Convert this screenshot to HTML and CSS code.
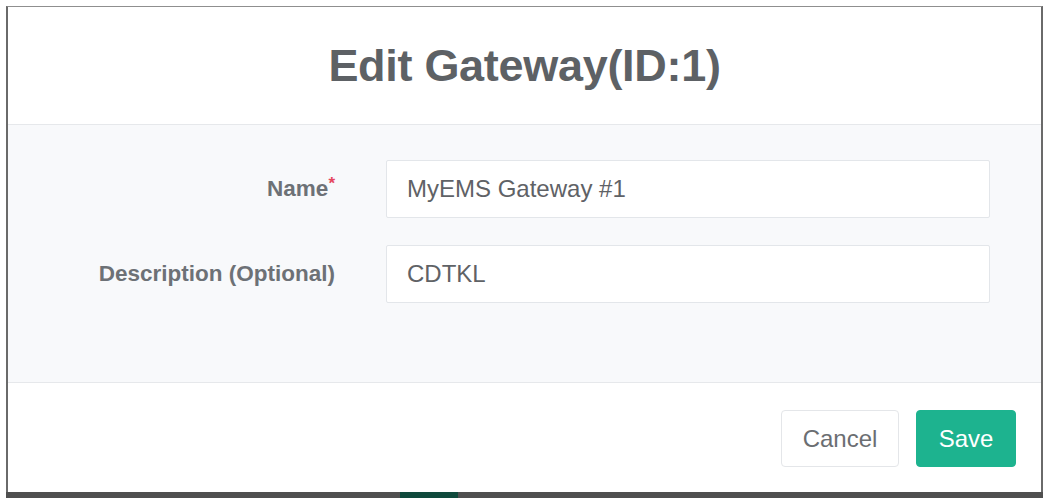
FILE: index.html
```html
<!DOCTYPE html>
<html lang="en">
<head>
<meta charset="utf-8">
<title>Edit Gateway</title>
<link rel="stylesheet" href="styles.css">
</head>
<body>
<div class="stage">
  <div class="modal">
    <div class="modal-header">
      <h2 class="modal-title">Edit Gateway(ID:1)</h2>
    </div>
    <div class="modal-body">
      <div class="form-row">
        <label class="form-label">Name<span class="req">*</span></label>
        <div class="form-input">MyEMS Gateway #1</div>
      </div>
      <div class="form-row">
        <label class="form-label">Description (Optional)</label>
        <div class="form-input">CDTKL</div>
      </div>
    </div>
    <div class="modal-footer">
      <button class="btn btn-cancel">Cancel</button>
      <button class="btn btn-save">Save</button>
    </div>
  </div>
  <div class="backdrop-strip"><span class="ghost-btn"></span></div>
</div>
</body>
</html>
```

FILE: styles.css
```css
html, body {
  margin: 0;
  padding: 0;
  background: #ffffff;
  font-family: "Liberation Sans", Arial, sans-serif;
}

.stage {
  width: 1047px;
  height: 498px;
  overflow: hidden;
  padding: 6px 4px 0 6px;
  box-sizing: border-box;
  display: flex;
  flex-direction: column;
}

.modal {
  height: 486px;
  box-sizing: border-box;
  border-top: 1px solid #8f8f8f;
  border-left: 2px solid #6a6a6a;
  border-right: 2px solid #6a6a6a;
  background: #ffffff;
  display: flex;
  flex-direction: column;
}

.modal-header {
  height: 117px;
  border-bottom: 1px solid #e6e8eb;
  display: flex;
  align-items: center;
  justify-content: center;
}

.modal-title {
  margin: 0;
  font-size: 45px;
  font-weight: bold;
  color: #5d6165;
  letter-spacing: -0.3px;
}

.modal-body {
  height: 257px;
  box-sizing: border-box;
  background: #f8f9fb;
  padding: 35px 51px 0 0;
  display: flex;
  flex-direction: column;
  gap: 27px;
}

.form-row {
  display: grid;
  grid-template-columns: 327px 1fr;
  column-gap: 51px;
  align-items: center;
}

.form-label {
  text-align: right;
  font-size: 22.5px;
  font-weight: bold;
  color: #6d7176;
}

.req {
  color: #e5475e;
  font-size: 17px;
  vertical-align: top;
  position: relative;
  top: -2px;
}

.form-input {
  height: 58px;
  box-sizing: border-box;
  background: #ffffff;
  border: 1px solid #e3e6ea;
  border-radius: 2px;
  padding: 0 20px;
  display: flex;
  align-items: center;
  font-size: 24px;
  color: #5f6266;
}

.modal-footer {
  height: 110px;
  box-sizing: border-box;
  border-top: 1px solid #e6e8eb;
  padding: 27px 25px 0 0;
  display: flex;
  justify-content: flex-end;
  align-items: flex-start;
  gap: 17px;
}

.btn {
  height: 57px;
  box-sizing: border-box;
  border-radius: 4px;
  font-family: "Liberation Sans", Arial, sans-serif;
  font-size: 24px;
  padding: 0;
  cursor: pointer;
}

.btn-cancel {
  width: 118px;
  background: #ffffff;
  border: 1px solid #e4e6e9;
  color: #6b6e72;
}

.btn-save {
  width: 100px;
  background: #1db38f;
  border: 1px solid #1db38f;
  color: #ffffff;
}

.backdrop-strip {
  height: 6px;
  background: #4f4f4f;
  display: flex;
  padding-left: 394px;
}

.ghost-btn {
  width: 58px;
  height: 6px;
  background: #0f4a3c;
}
```
